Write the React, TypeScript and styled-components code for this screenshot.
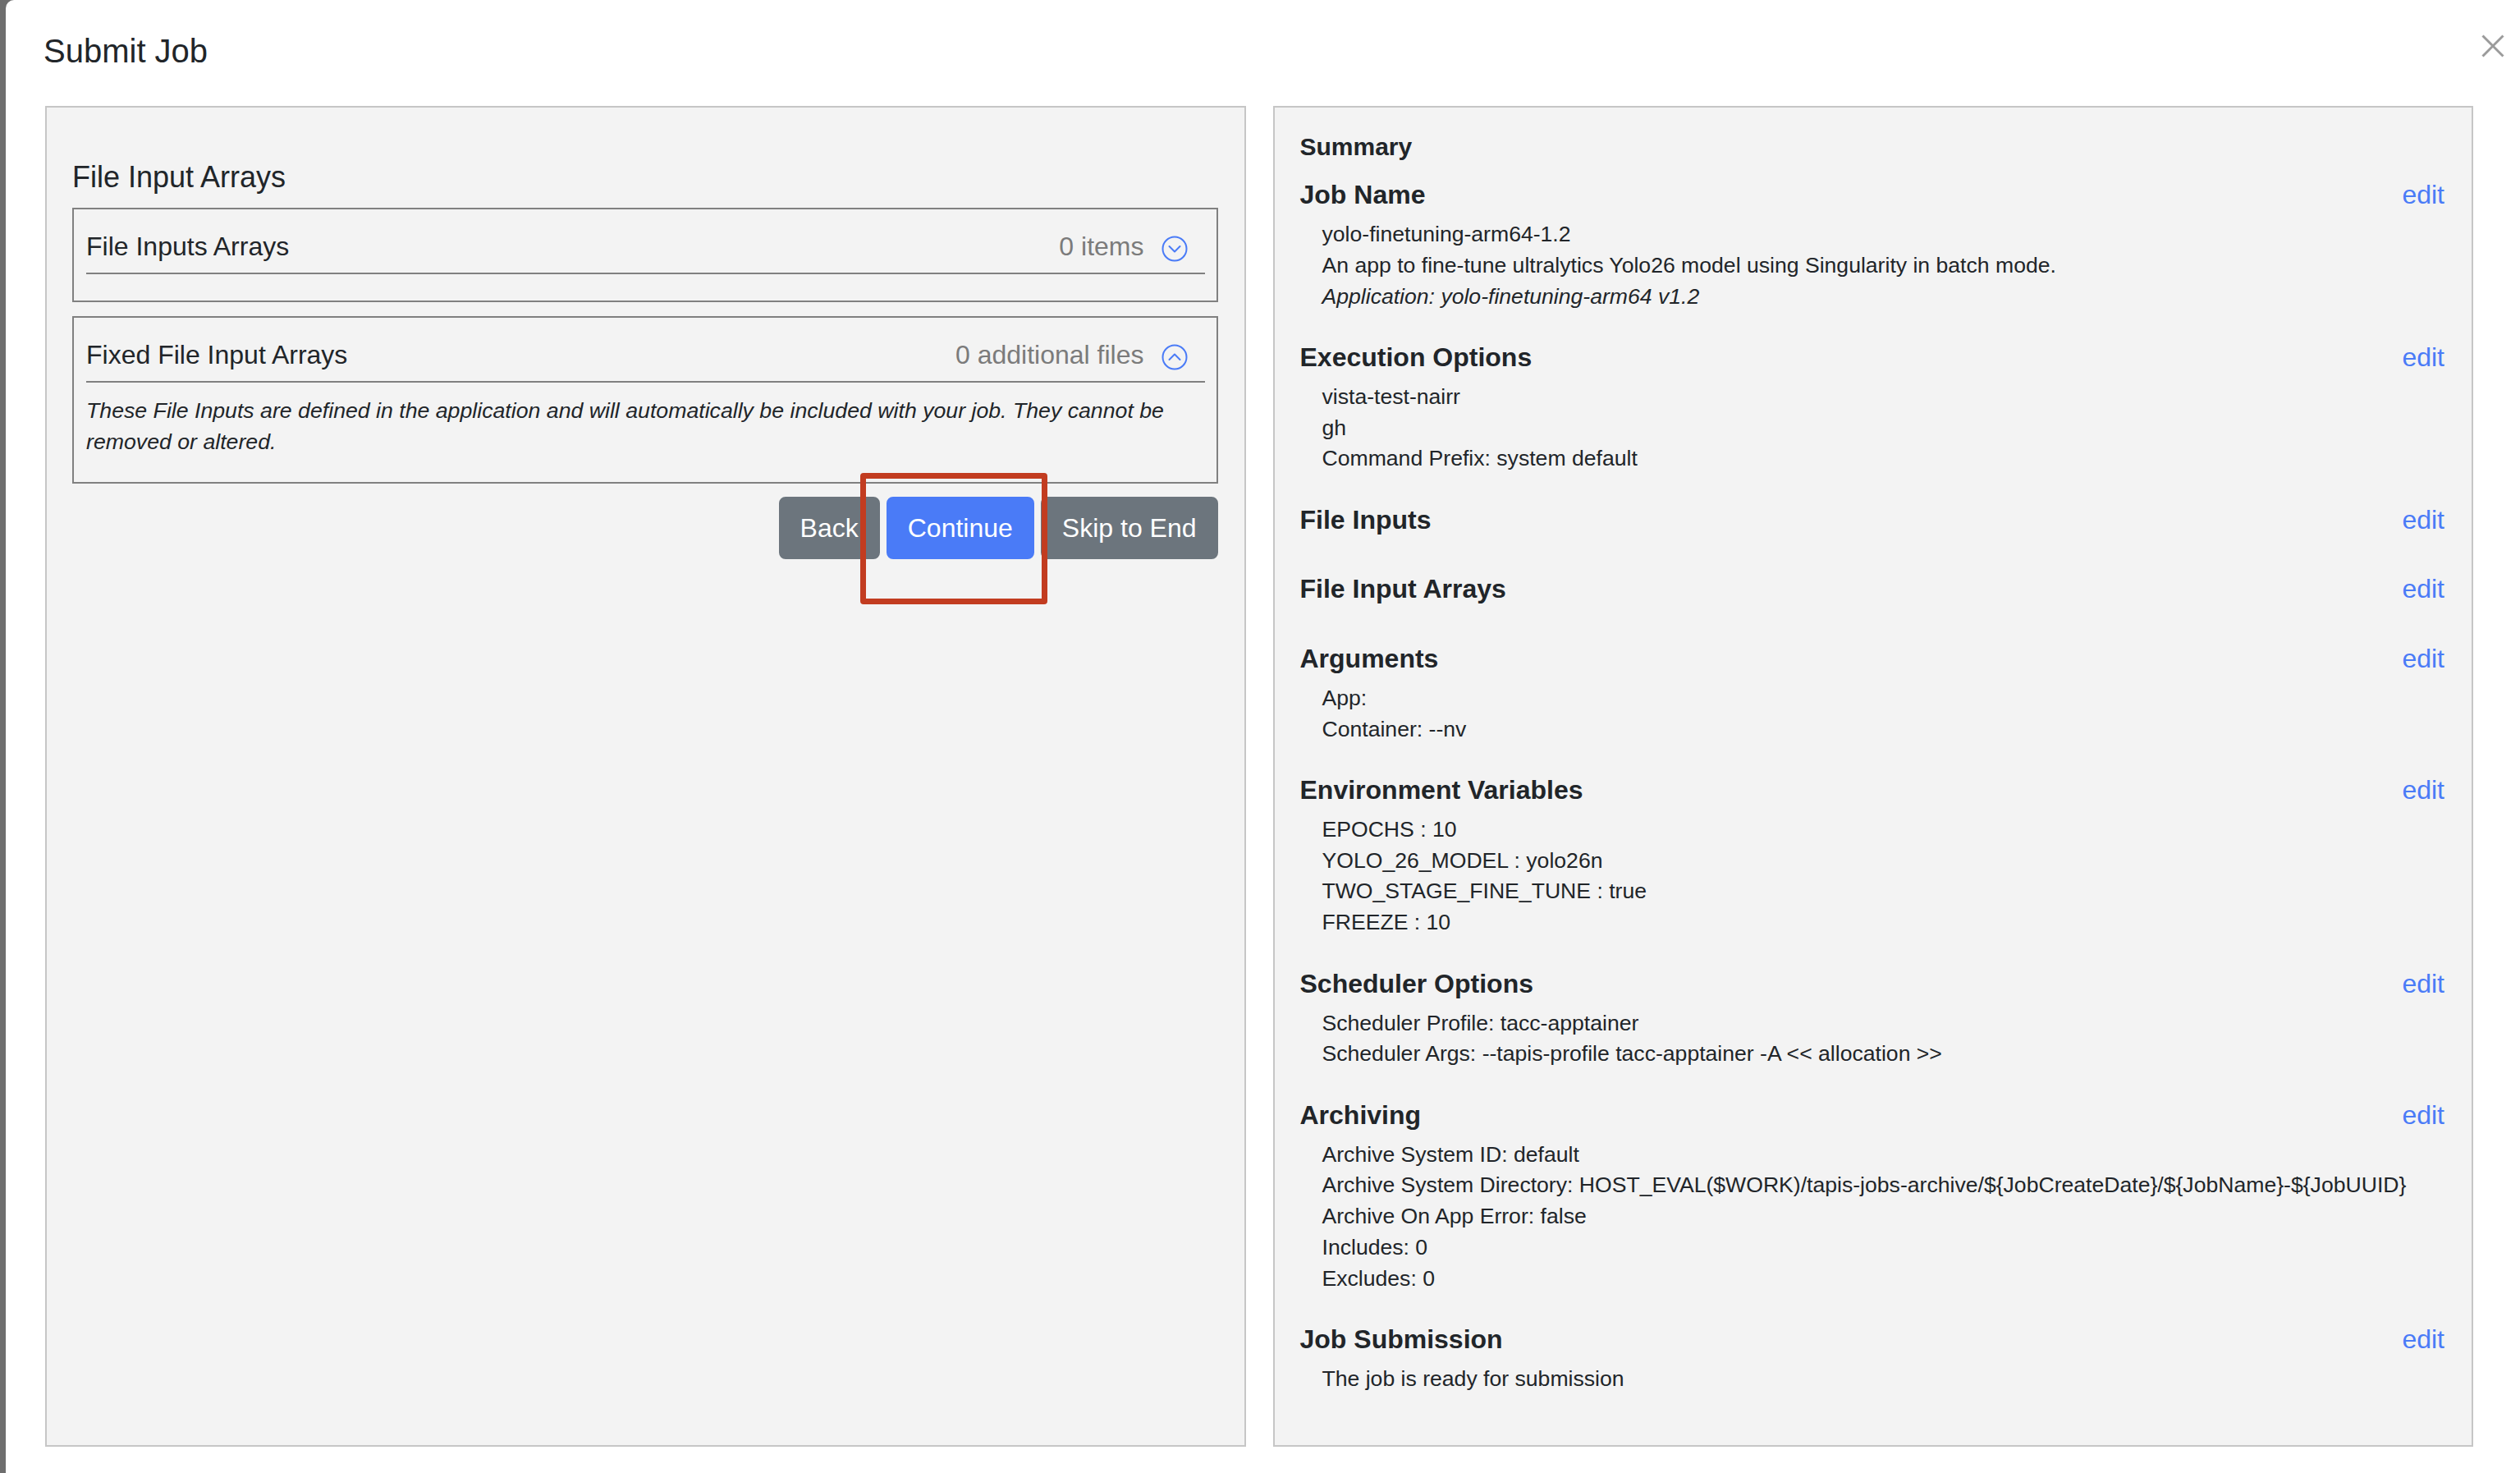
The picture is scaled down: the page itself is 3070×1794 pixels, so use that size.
import React from "react";
import styled, { createGlobalStyle } from "styled-components";

const GlobalStyle = createGlobalStyle`
  html, body {
    margin: 0;
    padding: 0;
    background: #6e6e6e;
  }
  body {
    font-family: "Liberation Sans", Arial, Helvetica, sans-serif;
    color: #212529;
  }
  *, *::before, *::after {
    box-sizing: border-box;
  }
`;

const Modal = styled.div`
  margin-left: 7px;
  min-height: 100vh;
  background: #ffffff;
  border-top-left-radius: 10px;
  display: flex;
  flex-direction: column;
`;

const Header = styled.header`
  display: flex;
  justify-content: space-between;
  align-items: flex-start;
  padding: 38px 19px 0 46px;
`;

const Title = styled.h5`
  margin: 0;
  font-size: 40px;
  line-height: 48px;
  font-weight: 400;
`;

const CloseButton = styled.button`
  margin-top: 4px;
  width: 28px;
  height: 28px;
  padding: 0;
  border: 0;
  background: transparent;
  display: flex;
  cursor: pointer;
`;

const Body = styled.div`
  display: grid;
  grid-template-columns: 1fr 1fr;
  column-gap: 33px;
  padding: 43px 57px 0 48px;
`;

const Panel = styled.section<{ $side: "left" | "right" }>`
  height: 1633px;
  background: #f3f3f3;
  border: 2px solid #c6c6c6;
  overflow: hidden;
  padding: ${(p) => (p.$side === "left" ? "30px 32px 0 31px" : "30px 33px 0 31px")};
`;

const StepTitle = styled.h2`
  margin: 33px 0 16px;
  font-size: 36px;
  line-height: 43px;
  font-weight: 400;
`;

const Accordion = styled.div`
  border: 2px solid #808080;
  padding: 21px 14px 0 15px;
  & + & {
    margin-top: 17px;
  }
`;

const AccordionHeader = styled.div`
  display: flex;
  align-items: center;
  border-bottom: 2px solid #808080;
  padding-bottom: 8px;
  font-size: 32px;
  line-height: 48px;
`;

const AccordionMeta = styled.div`
  margin-left: auto;
  display: flex;
  align-items: center;
  color: #7b7b7b;
`;

const ChevronIcon = styled.svg`
  margin: 6px 21px 0 21px;
  width: 32px;
  height: 32px;
  flex: none;
`;

const AccordionBody = styled.div`
  padding: 16px 0;
`;

const Note = styled.p`
  margin: 0 0 14px;
  font-size: 26.7px;
  line-height: 37.5px;
  font-style: italic;
`;

const ButtonRow = styled.div`
  display: flex;
  justify-content: flex-end;
  gap: 8px;
  margin-top: 16px;
`;

const Button = styled.button<{ $variant: "primary" | "secondary" }>`
  font-family: inherit;
  font-size: 32px;
  line-height: 48px;
  padding: 12px 24px;
  border-radius: 8px;
  color: #ffffff;
  border: 2px solid ${(p) => (p.$variant === "primary" ? "#4a7bf7" : "#6c757d")};
  background: ${(p) => (p.$variant === "primary" ? "#4a7bf7" : "#6c757d")};
  cursor: pointer;
`;

const Highlighted = styled.span`
  position: relative;
  display: flex;
`;

const Annotation = styled.span`
  position: absolute;
  left: -32px;
  top: -29px;
  width: 228px;
  height: 160px;
  border: 7px solid #c23c20;
  border-radius: 4px;
  pointer-events: none;
`;

const SummaryTitle = styled.h4`
  margin: 0 0 21px;
  font-size: 30px;
  line-height: 36px;
  font-weight: 700;
`;

const Section = styled.div`
  margin-bottom: 35.5px;
`;

const SectionHead = styled.div`
  display: flex;
  justify-content: space-between;
  align-items: baseline;
  line-height: 38px;
`;

const SectionTitle = styled.h3`
  margin: 0;
  font-size: 32px;
  line-height: 38px;
  font-weight: 700;
`;

const EditLink = styled.a`
  font-size: 32px;
  line-height: 38px;
  color: #4a7bf7;
  text-decoration: none;
  cursor: pointer;
`;

const Lines = styled.div`
  padding: 11px 0 0 27px;
`;

const Line = styled.div<{ $italic?: boolean }>`
  font-size: 26.6px;
  line-height: 37.8px;
  font-style: ${(p) => (p.$italic ? "italic" : "normal")};
  white-space: nowrap;
`;

type SummarySection = {
  title: string;
  lines: { text: string; italic?: boolean }[];
};

const sections: SummarySection[] = [
  {
    title: "Job Name",
    lines: [
      { text: "yolo-finetuning-arm64-1.2" },
      { text: "An app to fine-tune ultralytics Yolo26 model using Singularity in batch mode." },
      { text: "Application: yolo-finetuning-arm64 v1.2", italic: true },
    ],
  },
  {
    title: "Execution Options",
    lines: [{ text: "vista-test-nairr" }, { text: "gh" }, { text: "Command Prefix: system default" }],
  },
  { title: "File Inputs", lines: [] },
  { title: "File Input Arrays", lines: [] },
  {
    title: "Arguments",
    lines: [{ text: "App:" }, { text: "Container: --nv" }],
  },
  {
    title: "Environment Variables",
    lines: [
      { text: "EPOCHS : 10" },
      { text: "YOLO_26_MODEL : yolo26n" },
      { text: "TWO_STAGE_FINE_TUNE : true" },
      { text: "FREEZE : 10" },
    ],
  },
  {
    title: "Scheduler Options",
    lines: [
      { text: "Scheduler Profile: tacc-apptainer" },
      { text: "Scheduler Args: --tapis-profile tacc-apptainer -A << allocation >>" },
    ],
  },
  {
    title: "Archiving",
    lines: [
      { text: "Archive System ID: default" },
      {
        text: "Archive System Directory: HOST_EVAL($WORK)/tapis-jobs-archive/${JobCreateDate}/${JobName}-${JobUUID}",
      },
      { text: "Archive On App Error: false" },
      { text: "Includes: 0" },
      { text: "Excludes: 0" },
    ],
  },
  {
    title: "Job Submission",
    lines: [{ text: "The job is ready for submission" }],
  },
];

const Chevron: React.FC<{ up?: boolean }> = ({ up }) => (
  <ChevronIcon viewBox="0 0 32 32" fill="none" stroke="#4a7bf7" strokeWidth={2} strokeLinecap="round" strokeLinejoin="round">
    <circle cx="16" cy="16" r="14.5" />
    {up ? <path d="M9.5 19 L16 12.5 L22.5 19" /> : <path d="M9.5 13 L16 19.5 L22.5 13" />}
  </ChevronIcon>
);

export default function App() {
  return (
    <>
      <GlobalStyle />
      <Modal>
        <Header>
          <Title>Submit Job</Title>
          <CloseButton aria-label="Close">
            <svg width="28" height="28" viewBox="0 0 28 28" stroke="#9b9b9b" strokeWidth={3}>
              <line x1="1.5" y1="1.5" x2="26.5" y2="26.5" />
              <line x1="26.5" y1="1.5" x2="1.5" y2="26.5" />
            </svg>
          </CloseButton>
        </Header>
        <Body>
          <Panel $side="left">
            <StepTitle>File Input Arrays</StepTitle>
            <Accordion>
              <AccordionHeader>
                <span>File Inputs Arrays</span>
                <AccordionMeta>
                  <span>0 items</span>
                  <Chevron />
                </AccordionMeta>
              </AccordionHeader>
              <AccordionBody />
            </Accordion>
            <Accordion>
              <AccordionHeader>
                <span>Fixed File Input Arrays</span>
                <AccordionMeta>
                  <span>0 additional files</span>
                  <Chevron up />
                </AccordionMeta>
              </AccordionHeader>
              <AccordionBody>
                <Note>
                  These File Inputs are defined in the application and will automatically be included with your
                  job. They cannot be removed or altered.
                </Note>
              </AccordionBody>
            </Accordion>
            <ButtonRow>
              <Button $variant="secondary">Back</Button>
              <Highlighted>
                <Button $variant="primary">Continue</Button>
                <Annotation />
              </Highlighted>
              <Button $variant="secondary">Skip to End</Button>
            </ButtonRow>
          </Panel>
          <Panel $side="right">
            <SummaryTitle>Summary</SummaryTitle>
            {sections.map((s) => (
              <Section key={s.title}>
                <SectionHead>
                  <SectionTitle>{s.title}</SectionTitle>
                  <EditLink>edit</EditLink>
                </SectionHead>
                <Lines>
                  {s.lines.map((l, i) => (
                    <Line key={i} $italic={l.italic}>
                      {l.text}
                    </Line>
                  ))}
                </Lines>
              </Section>
            ))}
          </Panel>
        </Body>
      </Modal>
    </>
  );
}
